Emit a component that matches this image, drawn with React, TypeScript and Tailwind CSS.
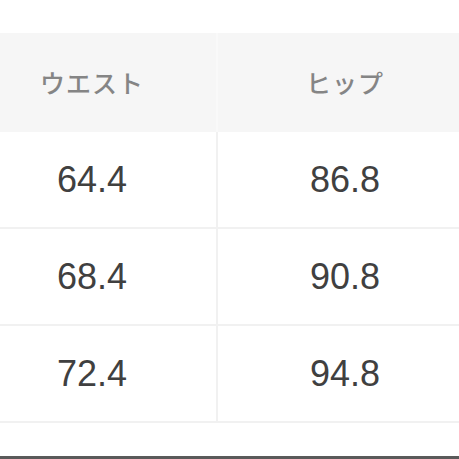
const rows = [
  ["64.4", "86.8"],
  ["68.4", "90.8"],
  ["72.4", "94.8"],
];

export default function App() {
  return (
    <div className="w-[459px] h-[459px] overflow-hidden bg-white flex flex-col">
      <div className="h-[33px]" />
      <div className="-ml-[32px] w-[520px] flex flex-col">
        <div className="grid grid-cols-[250px_254px] h-[99px] bg-[#f6f6f6]">
          <div className="flex items-center justify-center border-r-2 border-[#f9f9f9] text-[25px] font-medium text-[#858585] font-['Noto_Sans_CJK_JP',sans-serif] tracking-[1px]">
            ウエスト
          </div>
          <div className="flex items-center justify-center text-[25px] font-medium text-[#858585] font-['Noto_Sans_CJK_JP',sans-serif] tracking-[1px]">
            ヒップ
          </div>
        </div>
        {rows.map((r, i) => (
          <div key={i} className="grid grid-cols-[250px_254px] h-[97px] border-b-2 border-[#f1f1f1]">
            <div className="flex items-center justify-center border-r-2 border-[#f1f1f1] text-[36px] text-[#404040] font-['Liberation_Sans',sans-serif]">
              {r[0]}
            </div>
            <div className="flex items-center justify-center text-[36px] text-[#404040] font-['Liberation_Sans',sans-serif]">
              {r[1]}
            </div>
          </div>
        ))}
      </div>
      <div className="flex-1" />
      <div className="h-[3px] bg-[#5a5a5a]" />
    </div>
  );
}
